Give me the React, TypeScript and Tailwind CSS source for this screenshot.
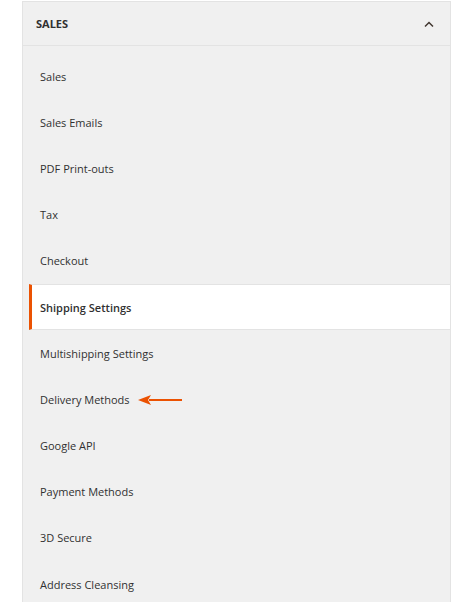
const items = [
  'Sales',
  'Sales Emails',
  'PDF Print-outs',
  'Tax',
  'Checkout',
  'Shipping Settings',
  'Multishipping Settings',
  'Delivery Methods',
  'Google API',
  'Payment Methods',
  '3D Secure',
  'Address Cleansing',
];

export default function App() {
  return (
    <div className="min-h-screen bg-white pl-[22px] pt-[1px] font-['Open_Sans',sans-serif] text-[11px]">
      <div className="w-[429px] border border-[#e3e3e3] bg-[#f0f0f0]">
        <div className="flex h-[44px] items-center justify-between border-b border-[#e3e3e3] pl-[13px] pr-[16px] pt-[1px]">
          <span className="font-bold uppercase text-[#303030]">Sales</span>
          <svg width="10" height="7" viewBox="0 0 10 7" className="text-[#41362f]">
            <path d="M1 5.5 L5 1.5 L9 5.5" fill="none" stroke="currentColor" strokeWidth="1.5" />
          </svg>
        </div>
        <ul className="pt-[7.4px] pb-[20px]">
          {items.map((item) => {
            const active = item === 'Shipping Settings';
            return (
              <li key={item} className="ml-[6px]">
                <div
                  className={`flex h-[46.18px] items-center border-l-[3px] pl-[8px] pt-[1px] ${
                    active
                      ? 'border-y border-y-[#e3e3e3] border-l-[#eb5202] bg-white font-semibold text-[#303030]'
                      : 'border-l-transparent text-[#303030]'
                  }`}
                >
                  <span>{item}</span>
                  {item === 'Delivery Methods' && (
                    <svg width="45" height="12" viewBox="0 0 45 12" className="ml-[8px]">
                      <path d="M11 6 H44" stroke="#eb5202" strokeWidth="2" />
                      <path d="M0 6 L13 1 L10 6 L13 11 Z" fill="#eb5202" />
                    </svg>
                  )}
                </div>
              </li>
            );
          })}
        </ul>
      </div>
    </div>
  );
}
